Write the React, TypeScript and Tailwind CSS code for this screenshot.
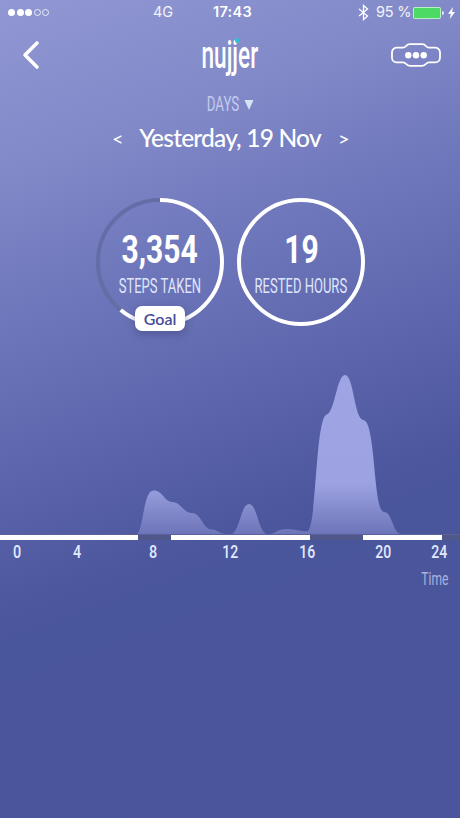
import type { ReactNode } from 'react';

const CENTER = 64;
const RADIUS = 62;
const CIRCUMFERENCE = 2 * Math.PI * RADIUS;

const timeline = [
  { width: 138, resting: true },
  { width: 33, resting: false },
  { width: 139, resting: true },
  { width: 53, resting: false },
  { width: 79, resting: true },
  { width: 18, resting: false },
];

function App() {
  return (
    <div className="w-[460px] h-[818px] overflow-hidden flex flex-col text-white font-['Lato',sans-serif] bg-[linear-gradient(160deg,#9097d3_0%,#8189c8_18%,#737bbf_29%,#656eb3_41%,#5962a9_52%,#4c579e_62%,#4a569c_66%,#4a559b_100%)]">
      <StatusBar />
      <Header />
      <DatePicker />
      <section className="flex gap-[13px] pl-24 mt-[43px]">
        <Ring value="3,354" label="STEPS TAKEN" progress={219 / 360} goal />
        <Ring value="19" label="RESTED HOURS" progress={1} />
      </section>
      <ActivityChart />
    </div>
  );
}

function StatusBar() {
  return (
    <div className="h-[25px] shrink-0 flex items-center pl-2 pr-[5px] font-['Inter',sans-serif] text-[14.5px] leading-none">
      <div className="flex gap-[1.5px] w-[145px]">
        <span className="size-[7px] rounded-full bg-white" />
        <span className="size-[7px] rounded-full bg-white" />
        <span className="size-[7px] rounded-full bg-white" />
        <span className="size-[7px] rounded-full border border-white/80" />
        <span className="size-[7px] rounded-full border border-white/80" />
      </div>
      <span className="w-[60px] text-white/90">4G</span>
      <span className="font-semibold tracking-[0.3px]">17:43</span>
      <div className="ml-auto flex items-center">
        <svg width="11" height="17" viewBox="0 0 11 17" fill="none" stroke="white" strokeWidth="1.3">
          <path d="M1 5l8.5 7-4 3.5V1.5l4 3.5L1 12" />
        </svg>
        <span className="ml-[7px] w-[35px] whitespace-nowrap tracking-[-0.2px] text-white/90">95 %</span>
        <div className="ml-[2px] w-7 h-3 rounded-[2px] border border-white/60 bg-[#4cd964]" />
        <div className="ml-px w-[2px] h-1 rounded-r bg-white/80" />
        <svg className="ml-[4px]" width="7" height="12" viewBox="0 0 7 12" fill="white">
          <path d="M5 0L0 6.8h2.8L1.8 12 7 4.9H4.1z" />
        </svg>
      </div>
    </div>
  );
}

function Header() {
  return (
    <header className="h-[60px] shrink-0 flex items-center justify-between pl-[22px] pr-[19px]">
      <svg width="50" height="30" viewBox="0 0 50 30" fill="none" stroke="white" strokeWidth="3.6" strokeLinecap="round" strokeLinejoin="round">
        <path d="M15 3L3 15l12 12" />
      </svg>
      <div className="relative mr-[4px] w-[56px] h-10 flex justify-center font-['Roboto',sans-serif] font-medium text-[39px] leading-10">
        <span className="scale-x-[0.58]">nujjer</span>
        <span className="absolute left-[33px] top-[3px] w-[4px] h-[5px] rounded-full bg-[#2cc6d3]" />
      </div>
      <svg width="50" height="24" viewBox="0 0 50 24" fill="none" stroke="white" strokeWidth="1.8">
        <path d="M12 4.7c1.8 0 2.2-.7 3.2-1.8C16.2 1.5 17.2 1.2 19 1.2h12c1.8 0 2.8.3 3.8 1.7 1 1.1 1.4 1.8 3.2 1.8h6.5a4.5 4.5 0 0 1 4.5 4.5v5.6a4.5 4.5 0 0 1-4.5 4.5H38c-1.8 0-2.2.7-3.2 1.8-1 1.4-2 1.7-3.8 1.7H19c-1.8 0-2.8-.3-3.8-1.7-1-1.1-1.4-1.8-3.2-1.8H5.5A4.5 4.5 0 0 1 1 14.8V9.2a4.5 4.5 0 0 1 4.500-4.500z" />
        <g fill="white" stroke="none">
          <circle cx="17.3" cy="12.3" r="3.2" />
          <circle cx="25" cy="12.3" r="3.2" />
          <circle cx="32.7" cy="12.3" r="3.2" />
        </g>
      </svg>
    </header>
  );
}

function DatePicker() {
  return (
    <div className="flex flex-col">
      <div className="flex items-center h-9 pl-[205px] gap-1 text-[#c3cbef]">
        <Narrow className="w-[35px] h-[22px] items-end">
          <span className="scale-x-[0.65] font-normal text-[20.5px]">DAYS</span>
        </Narrow>
        <svg className="mt-1" width="10" height="10" viewBox="0 0 10 10" fill="#d3e4f3">
          <path d="M0.5 0h9L5 10z" />
        </svg>
      </div>
      <div className="flex items-center justify-center h-[34px] gap-[17px]">
        <span className="text-[20px] w-[10px]">&lt;</span>
        <span className="w-[182px] flex justify-center whitespace-nowrap text-[24.5px] leading-none font-medium tracking-[-0.8px]">
          Yesterday, 19 Nov
        </span>
        <span className="text-[20px] w-[10px]">&gt;</span>
      </div>
    </div>
  );
}

function Narrow({ className, children }: { className: string; children: ReactNode }) {
  return (
    <span className={`flex items-center justify-center whitespace-nowrap leading-none font-['Roboto',sans-serif] ${className}`}>
      {children}
    </span>
  );
}

function Ring({ value, label, progress, goal }: { value: string; label: string; progress: number; goal?: boolean }) {
  return (
    <div className="relative size-32 flex flex-col items-center">
      <svg className="absolute inset-0 -rotate-90" width="128" height="128" viewBox="0 0 128 128" fill="none" strokeWidth="4">
        <circle cx={CENTER} cy={CENTER} r={RADIUS} stroke="#656da6" />
        <circle
          cx={CENTER}
          cy={CENTER}
          r={RADIUS}
          stroke="white"
          strokeDasharray={`${CIRCUMFERENCE * progress} ${CIRCUMFERENCE}`}
        />
      </svg>
      <Narrow className="mt-8 w-[78px] h-10">
        <span className="scale-x-[0.77] font-bold text-[39px]">{value}</span>
      </Narrow>
      <Narrow className="mt-[6px] w-[96px] h-5 text-[#dfe5fb]">
        <span className="scale-x-[0.635] font-normal text-[20.5px]">{label}</span>
      </Narrow>
      {goal && (
        <span className="absolute left-[39px] top-[108px] w-[50px] h-[25px] flex items-center justify-center rounded-[7px] bg-white text-[#464c98] text-[16px] font-semibold leading-none shadow-[0_3px_8px_rgba(50,58,110,0.45)]">
          Goal
        </span>
      )}
    </div>
  );
}

function ActivityChart() {
  return (
    <section className="mt-[48px] flex flex-col">
      <svg width="460" height="160" viewBox="0 374 460 160">
        <defs>
          <linearGradient id="activity" gradientUnits="userSpaceOnUse" x1="0" y1="374" x2="0" y2="534">
            <stop offset="0" stopColor="#9fa5e4" />
            <stop offset="0.68" stopColor="#9da3e2" />
            <stop offset="1" stopColor="#6d75b9" />
          </linearGradient>
        </defs>
        <g fill="url(#activity)">
          <path d="M137 534C144 528 143 490.5 153.5 490.5C163 490.5 164 501.5 172 502C182 502.5 183 513 192 513C202 513.5 202 529 212 529.5C218 530 219 533 225 534Z" />
          <path d="M232 534C240 530 241 504 249 504C257 504 258 530 266 534Z" />
          <path d="M271 534C277 532 279 529 286 529C293 529 300 531 307 531.5C317 531 315 416 327 414.5C335 411 337 375 345 375C354 375 354 419 363.5 420C376 422 373 511 384 512C392 512 392 530 400 534Z" />
        </g>
      </svg>
      <div className="h-px bg-[#5b629b]" />
      <div className="flex h-[5px]">
        {timeline.map((part, i) => (
          <div key={i} className={part.resting ? 'bg-white' : 'bg-[#50588b]'} style={{ width: part.width }} />
        ))}
      </div>
      <div className="flex h-6 items-center text-[#e2e9ff] font-medium text-[18px]">
        <Narrow className="ml-[7px] w-5"><span className="scale-x-[0.8]">0</span></Narrow>
        <Narrow className="ml-[40px] w-5"><span className="scale-x-[0.8]">4</span></Narrow>
        <Narrow className="ml-[56px] w-5"><span className="scale-x-[0.8]">8</span></Narrow>
        <Narrow className="ml-[57px] w-5"><span className="scale-x-[0.78]">12</span></Narrow>
        <Narrow className="ml-[57px] w-5"><span className="scale-x-[0.78]">16</span></Narrow>
        <Narrow className="ml-[56px] w-5"><span className="scale-x-[0.78]">20</span></Narrow>
        <Narrow className="ml-[36px] w-5"><span className="scale-x-[0.78]">24</span></Narrow>
      </div>
      <div className="flex justify-end pr-[11px] mt-[5px] text-[#aab2df]">
        <Narrow className="w-7 h-5"><span className="scale-x-[0.65] font-normal text-[18.5px]">Time</span></Narrow>
      </div>
    </section>
  );
}

export default App;
